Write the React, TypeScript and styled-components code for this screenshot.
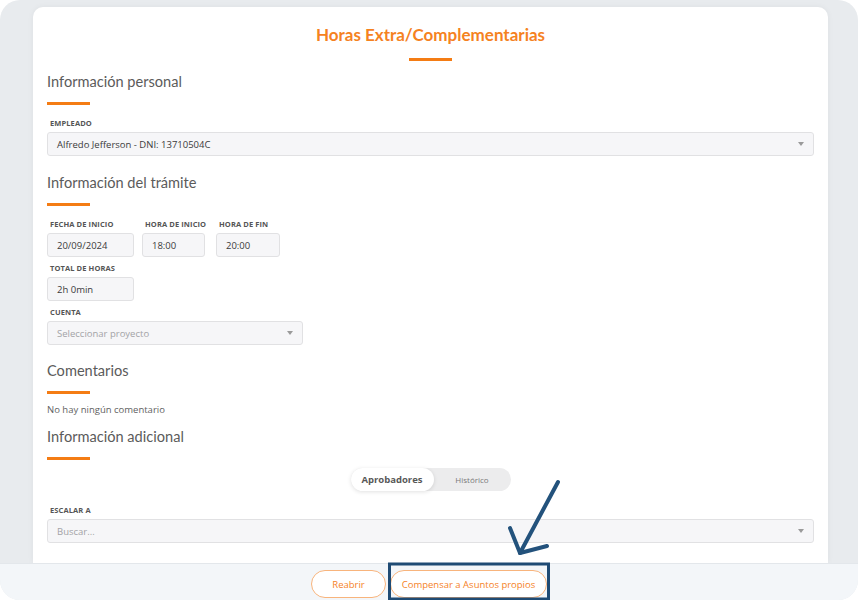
import React from "react";
import styled, { createGlobalStyle } from "styled-components";

const Global = createGlobalStyle`
  html, body { margin: 0; padding: 0; background: #ffffff; }
  body { font-family: "Open Sans", "Liberation Sans", sans-serif; }
  * { box-sizing: border-box; }
`;

const Frame = styled.div`
  position: relative;
  width: 858px;
  height: 600px;
  background: #e8ebee;
  border-radius: 20px;
  overflow: hidden;
  display: flex;
  flex-direction: column;
`;

const Scroll = styled.div`
  flex: 1;
  min-height: 0;
  padding: 7px 30px 0 33px;
  display: flex;
  flex-direction: column;
`;

const Card = styled.div`
  flex: 1;
  background: #ffffff;
  border-radius: 10px 10px 0 0;
  box-shadow: 0 0 6px rgba(0, 0, 0, 0.05);
  padding: 17px 14px 0 14px;
  display: flex;
  flex-direction: column;
`;

const Title = styled.h1`
  margin: 0;
  text-align: center;
  font-family: "Lato", "Open Sans", sans-serif;
  font-weight: 700;
  font-size: 17px;
  line-height: 22px;
  color: #f5821f;
`;

const Bar = styled.div<{ $center?: boolean }>`
  width: 43px;
  height: 3px;
  background: #f47c14;
  margin: ${(p) => (p.$center ? "12px auto 0" : "0")};
`;

const SectionTitle = styled.h2<{ $top: number }>`
  margin: ${(p) => p.$top}px 0 10px 0;
  font-family: "Lato", "Open Sans", sans-serif;
  font-weight: 400;
  font-size: 14.6px;
  line-height: 20px;
  color: #5b5b5b;
`;

const Label = styled.div<{ $top: number }>`
  margin: ${(p) => p.$top}px 0 4px 3px;
  font-family: "Open Sans", sans-serif;
  font-weight: 700;
  font-size: 7.5px;
  line-height: 10px;
  letter-spacing: 0.1px;
  color: #555;
  text-transform: uppercase;
  white-space: nowrap;
`;

const Row = styled.div`
  display: flex;
  align-items: flex-start;
`;

const Field = styled.div<{ $w: number; $gap?: number }>`
  width: ${(p) => p.$w}px;
  margin-right: ${(p) => p.$gap ?? 0}px;
  display: flex;
  flex-direction: column;
`;

const Input = styled.div<{ $muted?: boolean }>`
  width: 100%;
  height: 24px;
  background: #f6f6f8;
  border: 1px solid #e1e1e3;
  border-radius: 3px;
  padding: 0 9px;
  display: flex;
  align-items: center;
  justify-content: space-between;
  font-family: "Open Sans", sans-serif;
  font-size: 9.5px;
  color: ${(p) => (p.$muted ? "#a3a3a6" : "#3b3b3b")};
  white-space: nowrap;
`;

const Caret = styled.span`
  width: 0;
  height: 0;
  border-left: 3.5px solid transparent;
  border-right: 3.5px solid transparent;
  border-top: 4px solid #9a9a9a;
`;

const Note = styled.div`
  margin: 9px 0 0 0;
  font-family: "Open Sans", sans-serif;
  font-size: 9.5px;
  line-height: 14px;
  color: #616161;
`;

const ToggleWrap = styled.div`
  display: flex;
  justify-content: center;
  margin-top: 8px;
`;

const Toggle = styled.div`
  width: 160px;
  height: 23px;
  background: #ececed;
  border-radius: 12px;
  display: flex;
  align-items: stretch;
`;

const ToggleOpt = styled.div<{ $active?: boolean }>`
  flex: ${(p) => (p.$active ? "0 0 83px" : "1")};
  display: flex;
  align-items: center;
  justify-content: center;
  border-radius: 12px;
  background: ${(p) => (p.$active ? "#ffffff" : "transparent")};
  box-shadow: ${(p) => (p.$active ? "0 1px 4px rgba(0,0,0,0.12)" : "none")};
  font-family: "Open Sans", sans-serif;
  font-size: ${(p) => (p.$active ? "9.5px" : "8px")};
  font-weight: ${(p) => (p.$active ? 700 : 400)};
  color: ${(p) => (p.$active ? "#585858" : "#7a7a7a")};
`;

const Footer = styled.div`
  flex: 0 0 37px;
  background: #f3f6f9;
  border-top: 1px solid #e3e7eb;
  display: flex;
  justify-content: center;
  align-items: flex-start;
  gap: 4px;
  padding-top: 6px;
`;

const Button = styled.button<{ $w: number }>`
  width: ${(p) => p.$w}px;
  height: 28px;
  border-radius: 14px;
  border: 1px solid #f8b47c;
  background: #ffffff;
  color: #f5821f;
  font-family: "Open Sans", sans-serif;
  font-size: 9.5px;
  padding: 0;
  cursor: pointer;
`;

const Overlay = styled.svg`
  position: absolute;
  left: 0;
  top: 0;
  pointer-events: none;
`;

export default function App() {
  return (
    <>
      <Global />
      <Frame>
        <Scroll>
          <Card>
            <Title>Horas Extra/Complementarias</Title>
            <Bar $center />

            <SectionTitle $top={11}>Información personal</SectionTitle>
            <Bar />
            <Label $top={13}>Empleado</Label>
            <Input>
              <span>Alfredo Jefferson - DNI: 13710504C</span>
              <Caret />
            </Input>

            <SectionTitle $top={17}>Información del trámite</SectionTitle>
            <Bar />
            <Row>
              <Field $w={87} $gap={8}>
                <Label $top={13}>Fecha de inicio</Label>
                <Input>20/09/2024</Input>
              </Field>
              <Field $w={63} $gap={11}>
                <Label $top={13}>Hora de inicio</Label>
                <Input>18:00</Input>
              </Field>
              <Field $w={64}>
                <Label $top={13}>Hora de fin</Label>
                <Input>20:00</Input>
              </Field>
            </Row>
            <Field $w={87}>
              <Label $top={6}>Total de horas</Label>
              <Input>2h 0min</Input>
            </Field>
            <Field $w={256}>
              <Label $top={6}>Cuenta</Label>
              <Input $muted>
                <span>Seleccionar proyecto</span>
                <Caret />
              </Input>
            </Field>

            <SectionTitle $top={16}>Comentarios</SectionTitle>
            <Bar />
            <Note>No hay ningún comentario</Note>

            <SectionTitle $top={10}>Información adicional</SectionTitle>
            <Bar />
            <ToggleWrap>
              <Toggle>
                <ToggleOpt $active>Aprobadores</ToggleOpt>
                <ToggleOpt>Histórico</ToggleOpt>
              </Toggle>
            </ToggleWrap>
            <Label $top={14}>Escalar a</Label>
            <Input $muted>
              <span>Buscar...</span>
              <Caret />
            </Input>
          </Card>
        </Scroll>
        <Footer>
          <Button $w={75}>Reabrir</Button>
          <Button $w={157}>Compensar a Asuntos propios</Button>
        </Footer>
        <Overlay width="858" height="600" viewBox="0 0 858 600">
          <rect
            x="389.5"
            y="564"
            width="159"
            height="35"
            fill="none"
            stroke="#1f4b74"
            strokeWidth="3"
          />
          <g
            fill="none"
            stroke="#23527c"
            strokeWidth="4"
            strokeLinecap="round"
            strokeLinejoin="round"
          >
            <path d="M558 482 L520 553" />
            <path d="M510 528 L520 553 L547 546" />
          </g>
        </Overlay>
      </Frame>
    </>
  );
}
